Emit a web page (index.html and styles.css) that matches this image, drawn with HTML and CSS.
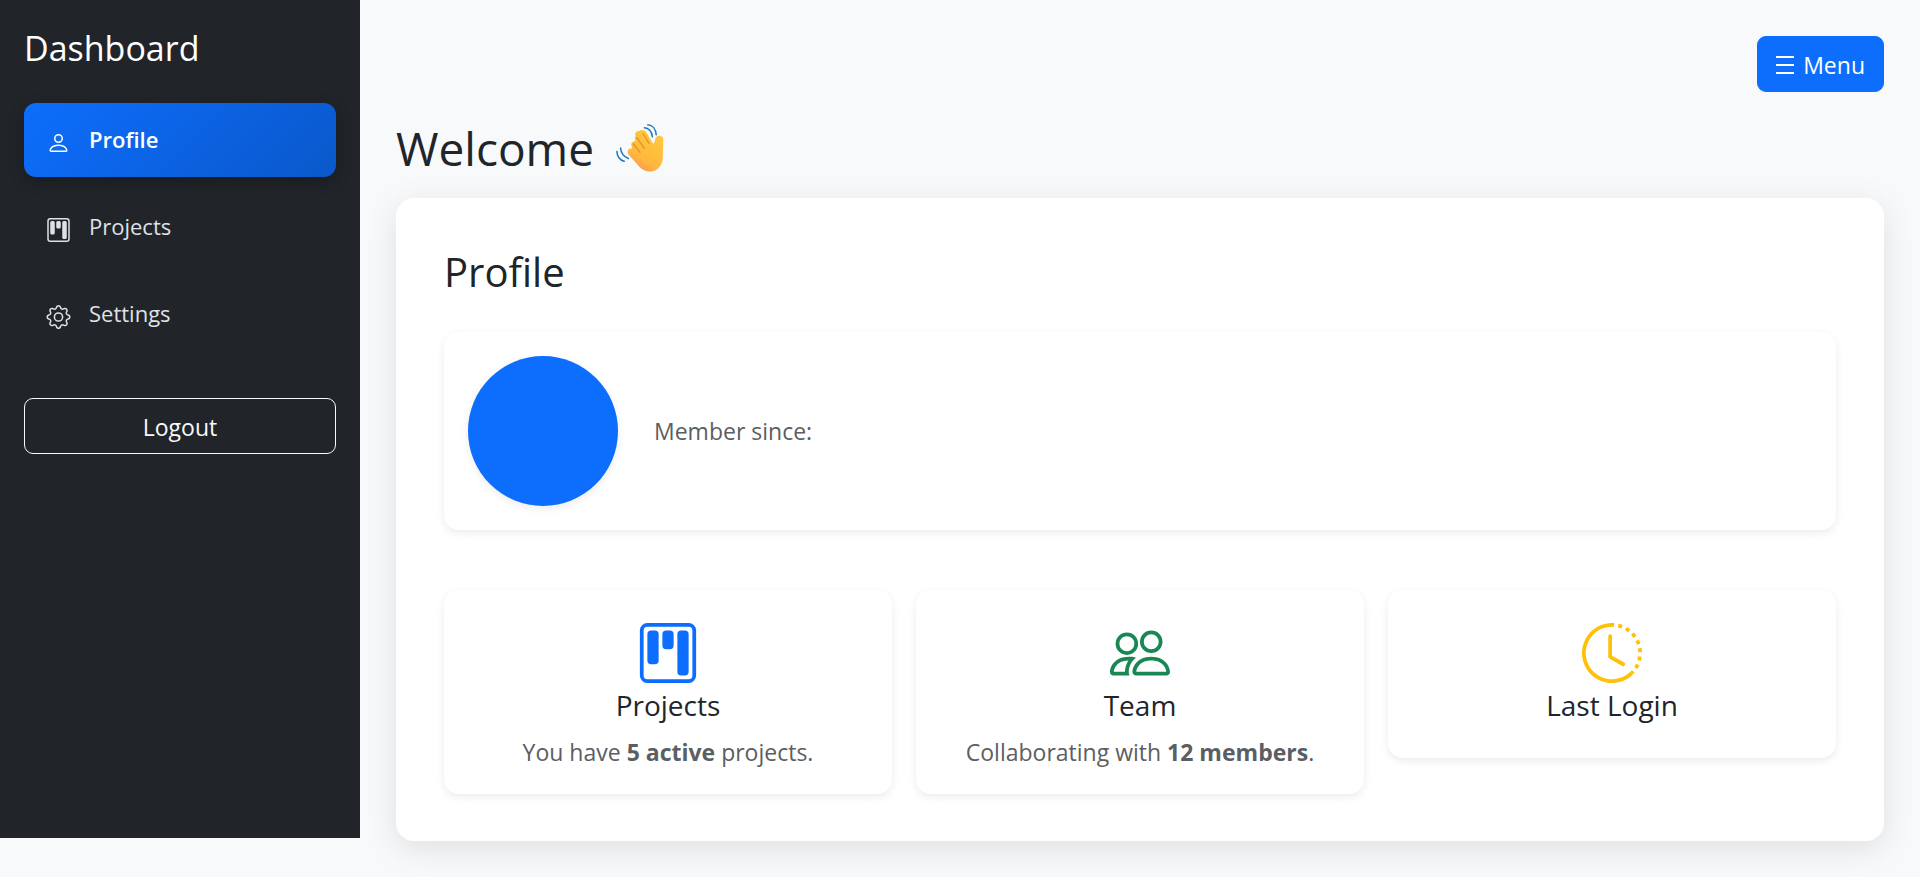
FILE: index.html
```
<!DOCTYPE html>
<html lang="en">
<head>
<meta charset="utf-8">
<meta name="viewport" content="width=device-width, initial-scale=1">
<title>Dashboard</title>
<link rel="stylesheet" href="styles.css">
</head>
<body>
<svg class="sprite" aria-hidden="true">
  <symbol id="kanban" viewBox="0 0 16 16"><path d="M13.5 1a1 1 0 0 1 1 1v12a1 1 0 0 1-1 1h-11a1 1 0 0 1-1-1V2a1 1 0 0 1 1-1zm-11-1a2 2 0 0 0-2 2v12a2 2 0 0 0 2 2h11a2 2 0 0 0 2-2V2a2 2 0 0 0-2-2z"/><path d="M6.5 3a1 1 0 0 1 1-1h1a1 1 0 0 1 1 1v3a1 1 0 0 1-1 1h-1a1 1 0 0 1-1-1zm-4 0a1 1 0 0 1 1-1h1a1 1 0 0 1 1 1v7a1 1 0 0 1-1 1h-1a1 1 0 0 1-1-1zm8 0a1 1 0 0 1 1-1h1a1 1 0 0 1 1 1v10a1 1 0 0 1-1 1h-1a1 1 0 0 1-1-1z"/></symbol>
</svg>
<div class="layout">
  <aside class="sidebar">
    <h2 class="brand">Dashboard</h2>
    <nav class="nav">
      <a class="nav-link active" href="#profile">
        <svg class="nav-icon" viewBox="0 0 16 16" aria-hidden="true"><path d="M8 8a3 3 0 1 0 0-6 3 3 0 0 0 0 6m2-3a2 2 0 1 1-4 0 2 2 0 0 1 4 0m4 8c0 1-1 1-1 1H3s-1 0-1-1 1-4 6-4 6 3 6 4m-1-.004c-.001-.246-.154-.986-.832-1.664C11.516 10.68 10.289 10 8 10s-3.516.68-4.168 1.332c-.678.678-.83 1.418-.832 1.664z"/></svg>
        <span>Profile</span>
      </a>
      <a class="nav-link" href="#projects">
        <svg class="nav-icon" aria-hidden="true"><use href="#kanban"/></svg>
        <span>Projects</span>
      </a>
      <a class="nav-link" href="#settings">
        <svg class="nav-icon" viewBox="0 0 16 16" aria-hidden="true"><path d="M8 4.754a3.246 3.246 0 1 0 0 6.492 3.246 3.246 0 0 0 0-6.492M5.754 8a2.246 2.246 0 1 1 4.492 0 2.246 2.246 0 0 1-4.492 0"/><path d="M9.796 1.343c-.527-1.79-3.065-1.79-3.592 0l-.094.319a.873.873 0 0 1-1.255.52l-.292-.16c-1.64-.892-3.433.902-2.54 2.541l.159.292a.873.873 0 0 1-.52 1.255l-.319.094c-1.79.527-1.79 3.065 0 3.592l.319.094a.873.873 0 0 1 .52 1.255l-.16.292c-.892 1.64.901 3.434 2.541 2.54l.292-.159a.873.873 0 0 1 1.255.52l.094.319c.527 1.79 3.065 1.79 3.592 0l.094-.319a.873.873 0 0 1 1.255-.52l.292.16c1.64.893 3.434-.902 2.54-2.541l-.159-.292a.873.873 0 0 1 .52-1.255l.319-.094c1.79-.527 1.79-3.065 0-3.592l-.319-.094a.873.873 0 0 1-.52-1.255l.16-.292c.893-1.64-.902-3.433-2.541-2.54l-.292.159a.873.873 0 0 1-1.255-.52zm-2.633.283c.246-.835 1.428-.835 1.674 0l.094.319a1.873 1.873 0 0 0 2.693 1.115l.291-.16c.764-.415 1.6.42 1.184 1.185l-.159.292a1.873 1.873 0 0 0 1.116 2.692l.318.094c.835.246.835 1.428 0 1.674l-.319.094a1.873 1.873 0 0 0-1.115 2.693l.16.291c.415.764-.42 1.6-1.185 1.184l-.291-.159a1.873 1.873 0 0 0-2.693 1.116l-.094.318c-.246.835-1.428.835-1.674 0l-.094-.319a1.873 1.873 0 0 0-2.692-1.115l-.292.16c-.764.415-1.6-.42-1.184-1.185l.159-.291A1.873 1.873 0 0 0 1.945 8.93l-.319-.094c-.835-.246-.835-1.428 0-1.674l.319-.094A1.873 1.873 0 0 0 3.06 4.377l-.16-.292c-.415-.764.42-1.6 1.185-1.184l.292.159a1.873 1.873 0 0 0 2.692-1.115z"/></svg>
        <span>Settings</span>
      </a>
    </nav>
    <button class="btn btn-outline" type="button">Logout</button>
  </aside>

  <main class="content">
    <div class="toolbar">
      <button class="btn btn-primary" type="button">
        <svg class="menu-icon" viewBox="0 0 18 18" aria-hidden="true"><path d="M0 0h18v2H0zM0 8h18v2H0zM0 16h18v2H0z"/></svg>
        Menu
      </button>
    </div>
    <h1 class="welcome">
      Welcome
      <svg class="wave" viewBox="0 0 48 48" aria-hidden="true">
        <defs>
          <linearGradient id="skin" x1="0.75" y1="0.1" x2="0.3" y2="0.95">
            <stop offset="0" stop-color="#ffc73d"/>
            <stop offset="0.7" stop-color="#ffb83d"/>
            <stop offset="1" stop-color="#f79a50"/>
          </linearGradient>
        </defs>
        <path fill="url(#skin)" d="M19.600 12c-1.300-2.800 1-5.300 3.700-4.900.9-.9 2-1.200 3.200-.9.900-.2 2.600-.1 3.700 1.700L36.500 18.800c.7 1.100 1.600.9 1.900-.3l1-3.900c.6-2.200 2.200-3.200 4.400-2.900 2.600.4 3.700 2.300 3.500 4.800L46.800 33c-.2 9-5.600 14.400-12.600 14.600-4.300.1-8-1.800-10.800-4.800L13 31c-2.500-2.800-1.400-6.200 1.800-6.500l1.300-.2-.4-1.700c-1.200-2.600.3-5 2.700-5.300l1.300-.2c-1-2-1.300-3.600-.1-5.100z"/>
        <g fill="none" stroke="#d98a1e" stroke-width="1.300" stroke-linecap="round" opacity=".8">
          <path d="M27 9.500 33 19.500M21 14 28.300 24.200M17.500 20 24 28.400"/>
        </g>
        <g fill="none" stroke="#1f78c4" stroke-width="1.500" stroke-linecap="round">
          <path d="M31.800.8c4.600.3 8 4.200 8.400 10M28.400 3.800c4.700.3 7.200 3.500 8 9M4.600 24c.4 5 3 8.700 7.800 10.500M.9 27.400c.2 4.900 2.700 8.500 7.300 9.900"/>
        </g>
      </svg>
    </h1>

    <section class="panel">
      <h2 class="panel-title">Profile</h2>
      <div class="card profile">
        <div class="avatar"></div>
        <p class="muted">Member since:</p>
      </div>
      <div class="stats">
        <article class="card stat">
          <svg class="stat-icon blue" aria-hidden="true"><use href="#kanban"/></svg>
          <h5 class="stat-title">Projects</h5>
          <p class="muted">You have <strong>5 active</strong> projects.</p>
        </article>
        <article class="card stat">
          <svg class="stat-icon green" viewBox="0 0 16 16" aria-hidden="true"><path d="M15 14s1 0 1-1-1-4-5-4-5 3-5 4 1 1 1 1zm-7.978-1L7 12.996c.001-.264.167-1.03.76-1.72C8.312 10.629 9.282 10 11 10c1.717 0 2.687.63 3.24 1.276.593.69.758 1.457.76 1.72l-.008.002-.014.002zM11 7a2 2 0 1 0 0-4 2 2 0 0 0 0 4m3-2a3 3 0 1 1-6 0 3 3 0 0 1 6 0M6.936 9.28a6 6 0 0 0-1.23-.247A7 7 0 0 0 5 9c-4 0-5 3-5 4q0 1 1 1h4.216A2.24 2.24 0 0 1 5 13c0-1.010.377-2.042 1.090-2.904.243-.294.526-.569.846-.816M4.920 10A5.500 5.500 0 0 0 4 13H1c0-.26.164-1.030.76-1.724.545-.636 1.492-1.256 3.160-1.275ZM1.500 5.500a3 3 0 1 1 6 0 3 3 0 0 1-6 0m3-2a2 2 0 1 0 0 4 2 2 0 0 0 0-4"/></svg>
          <h5 class="stat-title">Team</h5>
          <p class="muted">Collaborating with <strong>12 members</strong>.</p>
        </article>
        <article class="card stat">
          <svg class="stat-icon yellow" viewBox="0 0 16 16" aria-hidden="true"><path d="M8.515 1.019A7 7 0 0 0 8 1V0a8 8 0 0 1 .589.022zm2.004.45a7 7 0 0 0-.985-.299l.219-.976q.576.129 1.126.342zm1.370.71a7 7 0 0 0-.439-.27l.493-.87a8 8 0 0 1 .979.654l-.615.789a7 7 0 0 0-.418-.302zm1.834 1.790a7 7 0 0 0-.653-.796l.724-.69q.406.429.747.91zm.744 1.352a7 7 0 0 0-.214-.468l.893-.45a8 8 0 0 1 .45 1.088l-.95.313a7 7 0 0 0-.179-.483m.53 2.507a7 7 0 0 0-.1-1.025l.985-.17q.1.58.116 1.170zm-.131 1.538q.05-.254.081-.51l.993.123a8 8 0 0 1-.23 1.155l-.964-.267q.069-.247.12-.501m-.952 2.379q.276-.436.486-.908l.914.405q-.24.54-.555 1.038zm-.964 1.205q.183-.183.35-.378l.758.653a8 8 0 0 1-.401.432z"/><path d="M8 1a7 7 0 1 0 4.950 11.950l.707.707A8.001 8.001 0 1 1 8 0z"/><path d="M7.500 3a.5.5 0 0 1 .5.5v5.210l3.248 1.856a.5.5 0 0 1-.496.868l-3.500-2A.5.5 0 0 1 7 9V3.500a.5.5 0 0 1 .5-.5"/></svg>
          <h5 class="stat-title">Last Login</h5>
        </article>
      </div>
    </section>
  </main>
</div>
</body>
</html>
```
FILE: styles.css
```
* { box-sizing: border-box; }

body {
  margin: 0;
  background: #f8f9fb;
  color: #212529;
  font-family: "Open Sans", "Noto Sans", sans-serif;
  font-size: 23px;
  line-height: 36px;
}

h1, h2, h5, p { margin: 0; font-weight: 400; }

.sprite { display: none; }

.layout {
  display: flex;
  align-items: flex-start;
  min-height: 100vh;
}

.sidebar {
  flex: 0 0 360px;
  min-height: calc(100vh - 39px);
  padding: 24px;
  background: #212529;
  color: #fff;
}

.brand {
  margin-bottom: 31px;
  font-size: 34px;
  line-height: 48px;
}

.nav {
  display: grid;
  gap: 13px;
  margin-bottom: 47px;
}

.nav-link {
  display: flex;
  align-items: center;
  gap: 18px;
  height: 74px;
  padding: 0 22px 2px;
  border-radius: 12px;
  color: #dee2e6;
  font-size: 22px;
  text-decoration: none;
}

.nav-link.active {
  background: linear-gradient(135deg, #0d6efd, #0a58ca);
  box-shadow: 0 4px 15px rgba(0, 0, 0, 0.3);
  color: #fff;
  font-weight: 600;
}

.nav-icon {
  width: 25px;
  height: 24px;
  margin-top: 7px;
  fill: currentColor;
}

.btn {
  display: flex;
  align-items: center;
  justify-content: center;
  gap: 9px;
  padding: 10px 18px 8px;
  border: 1px solid;
  border-radius: 9px;
  font: inherit;
}

.btn-outline {
  width: 100%;
  border-color: #f8f9fa;
  background: transparent;
  color: #f8f9fa;
}

.btn-primary {
  border-color: #0d6efd;
  background: #0d6efd;
  color: #fff;
}

.menu-icon { width: 18px; height: 18px; fill: currentColor; }

.content {
  flex: 1;
  min-width: 0;
  padding: 36px;
}

.toolbar {
  display: flex;
  justify-content: flex-end;
  margin-bottom: 24px;
}

.welcome {
  display: flex;
  align-items: center;
  gap: 22px;
  margin-bottom: 18px;
  font-size: 46px;
  line-height: 64px;
}

.wave { width: 48px; height: 48px; }

.panel {
  padding: 48px 48px 47px;
  border-radius: 18px;
  background: #fff;
  box-shadow: 0 8px 32px rgba(0, 0, 0, 0.1);
}

.panel-title {
  margin-bottom: 34px;
  font-size: 40px;
  line-height: 52px;
}

.card {
  border-radius: 15px;
  background: #fff;
  box-shadow: 0 3px 8px rgba(0, 0, 0, 0.08);
}

.profile {
  display: flex;
  align-items: center;
  gap: 36px;
  margin-bottom: 60px;
  padding: 24px;
}

.avatar {
  width: 150px;
  height: 150px;
  border-radius: 50%;
  background: #0d6efd;
  box-shadow: 0 3px 8px rgba(0, 0, 0, 0.08);
}

.muted { color: #5b5e62; }

.stats {
  display: grid;
  grid-template-columns: repeat(3, 1fr);
  align-items: start;
  gap: 24px;
}

.stat {
  padding: 24px;
  text-align: center;
}

.stat-icon {
  display: block;
  width: 60px;
  height: 60px;
  margin: 9px auto 4px;
  fill: currentColor;
}

.blue { color: #0d6efd; }
.green { color: #198754; }
.yellow { color: #ffc107; }

.stat-title {
  margin-bottom: 11px;
  font-size: 28px;
  line-height: 36px;
}
```
